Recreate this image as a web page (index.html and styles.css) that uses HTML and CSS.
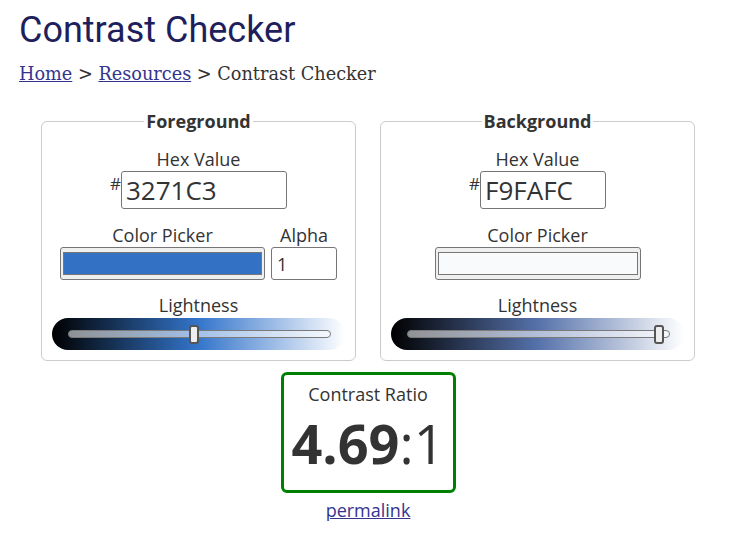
FILE: index.html
```html
<!DOCTYPE html>
<html lang="en">
<head>
<meta charset="utf-8">
<title>Contrast Checker</title>
<link rel="stylesheet" href="styles.css">
</head>
<body>
<h1 class="title">Contrast Checker</h1>
<nav class="crumbs"><a href="#">Home</a> &gt; <a href="#">Resources</a> &gt; Contrast Checker</nav>
<div class="checker">
  <fieldset class="panel">
    <legend class="panel-legend">Foreground</legend>
    <label class="lbl" for="fhex">Hex Value</label>
    <div class="hex-row"><span class="hash">#</span><input id="fhex" class="hex-input hex-input-fg" value="3271C3"></div>
    <div class="pick-row">
      <div class="pick-col"><label class="lbl" for="fpick">Color Picker</label><input id="fpick" type="color" class="swatch swatch-fg" value="#3271c3"></div>
      <div class="pick-col"><label class="lbl" for="falpha">Alpha</label><input id="falpha" class="alpha" value="1"></div>
    </div>
    <label class="lbl" for="flight">Lightness</label>
    <div class="grad grad-fg"><input id="flight" type="range" class="range" min="0" max="100" value="48"></div>
  </fieldset>
  <fieldset class="panel">
    <legend class="panel-legend">Background</legend>
    <label class="lbl" for="bhex">Hex Value</label>
    <div class="hex-row"><span class="hash">#</span><input id="bhex" class="hex-input hex-input-bg" value="F9FAFC"></div>
    <div class="pick-row">
      <div class="pick-col"><label class="lbl" for="bpick">Color Picker</label><input id="bpick" type="color" class="swatch swatch-bg" value="#f9fafc"></div>
    </div>
    <label class="lbl" for="blight">Lightness</label>
    <div class="grad grad-bg"><input id="blight" type="range" class="range" min="0" max="100" value="98"></div>
  </fieldset>
</div>
<div class="result">
  <div class="ratio-box">
    <div class="ratio-label">Contrast Ratio</div>
    <div class="ratio"><b class="ratio-num">4.69</b>:1</div>
  </div>
  <a class="permalink" href="#">permalink</a>
</div>
</body>
</html>
```

FILE: styles.css
```css
html, body {
  margin: 0;
  background: #fff;
}
body {
  padding: 0 19px;
  font-family: "Open Sans", "Liberation Sans", sans-serif;
  font-size: 18px;
  color: #333;
}
.title {
  margin: 9px 0 0;
  font-family: Roboto, "Liberation Sans", sans-serif;
  font-weight: 400;
  font-size: 36px;
  line-height: 42px;
  color: #1e1f5c;
}
.crumbs {
  margin-top: 13px;
  font-family: "DejaVu Serif", "Liberation Serif", serif;
  font-size: 17.7px;
  line-height: 20px;
  color: #333;
}
.crumbs a, .permalink {
  color: #34348f;
  text-decoration: underline;
}
.checker {
  margin: 25px 0 0 22px;
  width: 654px;
  display: grid;
  grid-template-columns: 315px 315px;
  column-gap: 24px;
}
.panel {
  margin: 0;
  min-width: 0;
  padding: 14px 10px 10px;
  border: 1px solid #ccc;
  border-radius: 6px;
  display: flex;
  flex-direction: column;
  align-items: center;
}
.panel-legend {
  margin: 0 auto;
  padding: 0 2px;
  font-weight: 700;
  font-size: 18px;
  color: #333;
}
.lbl {
  display: block;
  text-align: center;
  line-height: normal;
}
.hex-row {
  display: flex;
  align-items: flex-start;
  margin-bottom: 14px;
}
.hash {
  font-size: 17px;
  line-height: 20px;
  margin-top: 3px;
}
.hex-input {
  box-sizing: border-box;
  height: 38px;
  margin: 0;
  padding: 0 4px;
  border: 1px solid #767676;
  border-radius: 3px;
  font-family: "Open Sans", sans-serif;
  font-size: 26px;
  color: #333;
  background: #fff;
}
.hex-input-fg { width: 166px; }
.hex-input-bg { width: 126px; }
.pick-row {
  display: flex;
  justify-content: center;
  gap: 6px;
  margin-bottom: 13px;
}
.pick-col {
  display: flex;
  flex-direction: column;
  align-items: center;
}
.swatch {
  -webkit-appearance: none;
  appearance: none;
  box-sizing: border-box;
  height: 33px;
  margin: 0;
  padding: 0;
  border: 1px solid #767676;
  border-radius: 3px;
  background: #efefef;
  cursor: pointer;
}
.swatch-fg { width: 205px; }
.swatch-bg { width: 206px; }
.swatch::-webkit-color-swatch-wrapper {
  padding: 4px 2px;
}
.swatch::-webkit-color-swatch {
  border: 1px solid #777;
  border-radius: 0;
}
.alpha {
  box-sizing: border-box;
  width: 66px;
  height: 33px;
  margin: 0;
  padding: 0 5px;
  border: 1px solid #767676;
  border-radius: 3px;
  font-family: "Open Sans", sans-serif;
  font-size: 18px;
  color: #333;
}
.grad {
  box-sizing: border-box;
  width: 293px;
  height: 32px;
  margin-top: 1px;
  padding: 0 14px 0 16px;
  border-radius: 16px;
  display: flex;
  align-items: center;
}
.grad-fg {
  background: linear-gradient(to right, #000 0%, #3475cb 50%, #fff 100%);
}
.grad-bg {
  background: linear-gradient(to right, #000 0%, #5571aa 50%, #fff 100%);
}
.range {
  -webkit-appearance: none;
  appearance: none;
  width: 100%;
  height: 20px;
  margin: 0;
  padding: 0;
  background: transparent;
}
.range::-webkit-slider-runnable-track {
  height: 8px;
  border: 1px solid #7a7a7a;
  border-radius: 5px;
  background: rgba(255, 255, 255, 0.55);
}
.range::-webkit-slider-thumb {
  -webkit-appearance: none;
  appearance: none;
  box-sizing: border-box;
  width: 10px;
  height: 19px;
  margin-top: -6px;
  border: 2px solid #555;
  border-radius: 3px;
  background: #eee;
}
.result {
  margin-left: 22px;
  width: 654px;
  display: flex;
  flex-direction: column;
  align-items: center;
}
.ratio-box {
  box-sizing: border-box;
  width: 175px;
  margin-top: 11px;
  padding: 7px 0 14px;
  border: 3px solid #008000;
  border-radius: 6px;
  text-align: center;
}
.ratio-label {
  line-height: normal;
}
.ratio {
  margin-top: 5px;
  font-size: 54px;
  line-height: 65px;
  color: #333;
}
.ratio-num {
  font-weight: 700;
}
.permalink {
  margin-top: 5px;
  font-size: 18px;
  line-height: normal;
}
```
